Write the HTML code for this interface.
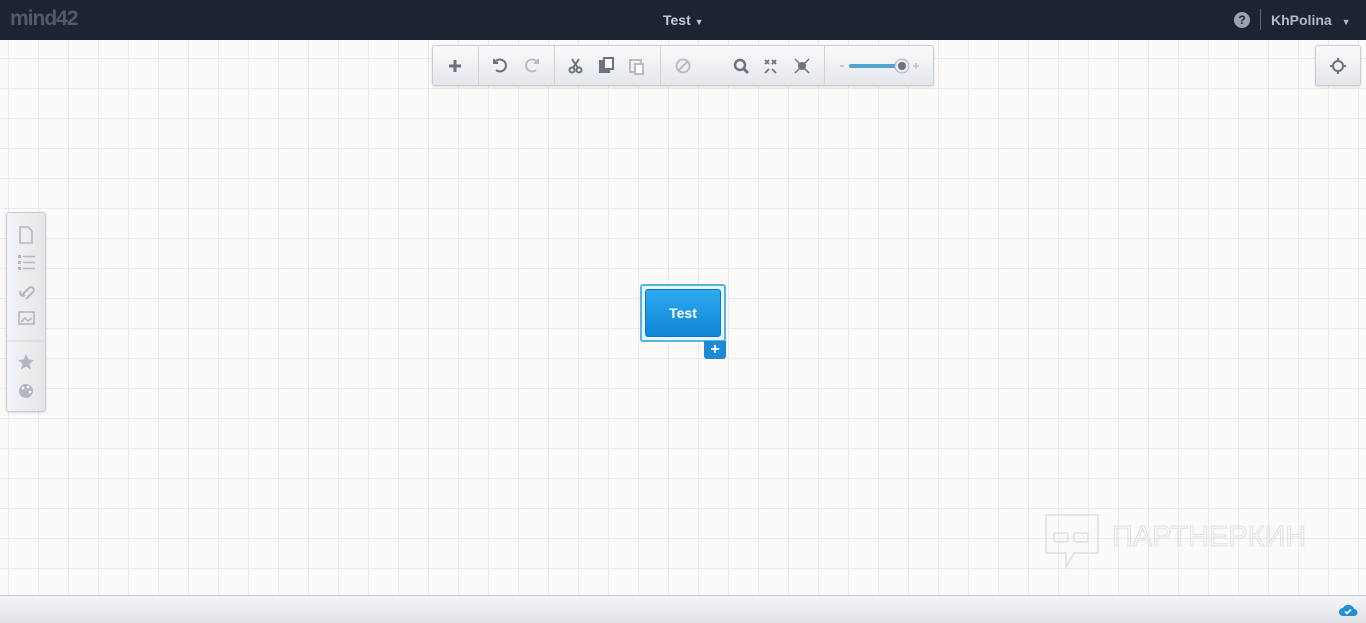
<!DOCTYPE html>
<html><head><meta charset="utf-8"><style>
*{margin:0;padding:0;box-sizing:border-box}
body{width:1366px;height:623px;overflow:hidden;font-family:"Liberation Sans",sans-serif;background:#fbfaf8;position:relative}
.top{position:absolute;left:0;top:0;width:1366px;height:40px;background:#1c2331}
.logo{position:absolute;left:10px;top:7px;font-size:21px;font-weight:bold;color:#4f5b6b;letter-spacing:-1px}
.title{position:absolute;left:663px;top:12px;color:#c4cad3;font-weight:bold;font-size:14px}
.user{position:absolute;left:1271px;top:12px;color:#b3bac5;font-weight:bold;font-size:14px}
.help{position:absolute;left:1234px;top:12px;width:16px;height:16px;border-radius:50%;background:#9aa3af;color:#1c2331;font-size:12px;font-weight:bold;text-align:center;line-height:16px}
.sep{position:absolute;left:1260px;top:9px;width:1px;height:21px;background:#5b6473}
.canvas{position:absolute;left:0;top:40px;width:1366px;height:555px;background-color:#fbfaf8;background-image:linear-gradient(to right,#e2ecf1 1px,transparent 1px),linear-gradient(to bottom,#e2ecf1 1px,transparent 1px);background-size:30px 30px;background-position:8px 18px}
.tb{position:absolute;top:45px;height:41px;background:linear-gradient(#fbfbfc,#e4e6ea);border:1px solid #c9ccd2;border-radius:3px;box-shadow:0 1px 2px rgba(0,0,0,.12)}
.tb .d{position:absolute;top:0;width:1px;height:39px;background:#cfd2d7}
.side{position:absolute;left:6px;top:212px;width:40px;height:200px;background:linear-gradient(90deg,#f3f4f6,#e4e6ea);border:1px solid #c9ccd2;border-radius:3px;box-shadow:0 1px 2px rgba(0,0,0,.12)}
.node{position:absolute;left:640px;top:284px;width:86px;height:58px;border:2px solid #55b3e6;border-radius:3px;background:#e8f5fc}
.node .in{position:absolute;left:3px;top:3px;width:76px;height:48px;border-radius:3px;background:linear-gradient(#2eaaf0,#0f86d4);color:#fff;font-weight:bold;font-size:14px;text-align:center;line-height:46px;border:1px solid #0c79be}
.plus{position:absolute;left:704px;top:341px;width:22px;height:18px;background:#1c8bd4;border-radius:0 0 3px 3px;color:#fff;font-weight:bold;text-align:center;font-size:16px;line-height:17px}
.bot{position:absolute;left:0;top:595px;width:1366px;height:28px;background:linear-gradient(#f4f5f7,#dfe2e7);border-top:1px solid #c8ccd2}
.wm{position:absolute;left:1112px;top:521px;font-size:29px;color:transparent;-webkit-text-stroke:1px #e2e2e2;letter-spacing:0px}
</style></head><body>
<div class="top">
<div class="logo">mind42</div>
<div class="title">Test <span style="font-size:9px">▼</span></div>
<div class="help">?</div><div class="sep"></div>
<div class="user">KhPolina <span style="font-size:9px;margin-left:6px">▼</span></div>
</div>
<div class="canvas"></div>
<div class="tb" style="left:432px;width:502px">
<div class="d" style="left:45px"></div><div class="d" style="left:121px"></div><div class="d" style="left:227px"></div><div class="d" style="left:391px"></div>
<svg width="500" height="39" style="position:absolute;left:0;top:0" fill="none" stroke="#6b7380" stroke-width="2">
<path d="M22 14v12M16 20h12" stroke-width="3"/>
<path d="M63 24a6 6 0 1 0-1-8M61 13v4h4" />
<path d="M103 24a6 6 0 1 1 1-8M105 13v4h-4" stroke="#b8bdc4"/>
<circle cx="139" cy="24" r="2.5"/><circle cx="146" cy="24" r="2.5"/><path d="M139 13l6 9M146 13l-6 9"/>
<rect x="167" y="15" width="9" height="11" fill="#6b7380"/><rect x="171" y="12" width="9" height="11" fill="#fff"/>
<rect x="197" y="14" width="11" height="12" stroke="#b8bdc4"/><rect x="202" y="18" width="8" height="10" fill="#fff" stroke="#b8bdc4"/>
<circle cx="250" cy="20" r="6.5" stroke="#b8bdc4"/><path d="M246 24l8-8" stroke="#b8bdc4"/>
<circle cx="307" cy="19" r="5" stroke-width="2.5"/><path d="M311 23l4 4" stroke-width="3"/>
<path d="M332 14l4 4M336 14l-4 4M343 14l-4 4M339 14l4 4M332 27l4-4M343 27l-4-4" stroke-width="1.8"/>
<circle cx="369" cy="20" r="3" fill="#6b7380"/><path d="M362 13l14 14M376 13l-14 14" stroke-width="1.5"/>
<path d="M407 20h4" stroke="#b8bdc4" stroke-width="1.5"/>
<path d="M418 20h50" stroke="#4fa3cc" stroke-width="4" stroke-linecap="round"/>
<circle cx="469" cy="20" r="7" fill="#e6e8eb" stroke="#b0b5bc" stroke-width="1"/><circle cx="469" cy="20" r="4" fill="#6b7380" stroke="none"/>
<path d="M480 20h6M483 17v6" stroke="#b8bdc4" stroke-width="1.3"/>
</svg>
</div>
<div class="tb" style="left:1315px;width:46px">
<svg width="44" height="39" fill="none" stroke="#6b7380" stroke-width="2"><circle cx="22" cy="20" r="5"/><path d="M22 12v4M22 24v4M14 20h4M26 20h4"/></svg>
</div>
<div class="side">
<svg width="38" height="198" fill="none" stroke="#b3b8c0" stroke-width="1.6">
<path d="M13 14h8l4 4v12H13z"/>
<g fill="#b3b8c0" stroke="none"><rect x="11" y="42" width="3" height="3"/><rect x="11" y="48" width="3" height="3"/><rect x="11" y="54" width="3" height="3"/></g>
<path d="M16 43.5h12M16 49.5h12M16 55.5h12"/>
<path d="M15 82l7-7a2.5 2.5 0 0 1 4 4l-7 7M14 78a2.5 2.5 0 0 0 4 4" stroke-width="2"/>
<rect x="12" y="99" width="15" height="12"/><path d="M14 109l4-4 3 3 4-3"/>
<path d="M0 128h38" stroke="#d0d3d8" stroke-width="1"/>
<path d="M19 141l2.5 5.5 5.5.5-4.5 4 1.5 5.5-5-3-5 3 1.5-5.5-4.5-4 5.5-.5z" fill="#b3b8c0" stroke="none"/>
<circle cx="19" cy="178" r="7" fill="#b3b8c0" stroke="none"/><circle cx="16" cy="175" r="1.3" fill="#fff" stroke="none"/><circle cx="21" cy="174" r="1.3" fill="#fff" stroke="none"/><circle cx="23" cy="179" r="1.3" fill="#fff" stroke="none"/>
</svg>
</div>
<div class="node"><div class="in">Test</div></div>
<div class="plus">+</div>
<div class="wm">ПАРТНЕРКИН</div>
<svg style="position:absolute;left:1044px;top:513px" width="56" height="58" fill="none" stroke="#e0e0e0" stroke-width="1.5"><path d="M2 2h52v38H30l-8 14v-14H2z"/><rect x="10" y="20" width="14" height="9" rx="2"/><rect x="30" y="20" width="14" height="9" rx="2"/></svg>
<div class="bot"><svg style="position:absolute;left:1338px;top:7px" width="20" height="14"><path d="M5 13a4 4 0 0 1 0-8 6 6 0 0 1 11 1 3.5 3.5 0 0 1 0 7z" fill="#1f8fd6"/><path d="M7 8.5l2 2 4-4" stroke="#fff" stroke-width="1.6" fill="none"/></svg></div>
</body></html>
